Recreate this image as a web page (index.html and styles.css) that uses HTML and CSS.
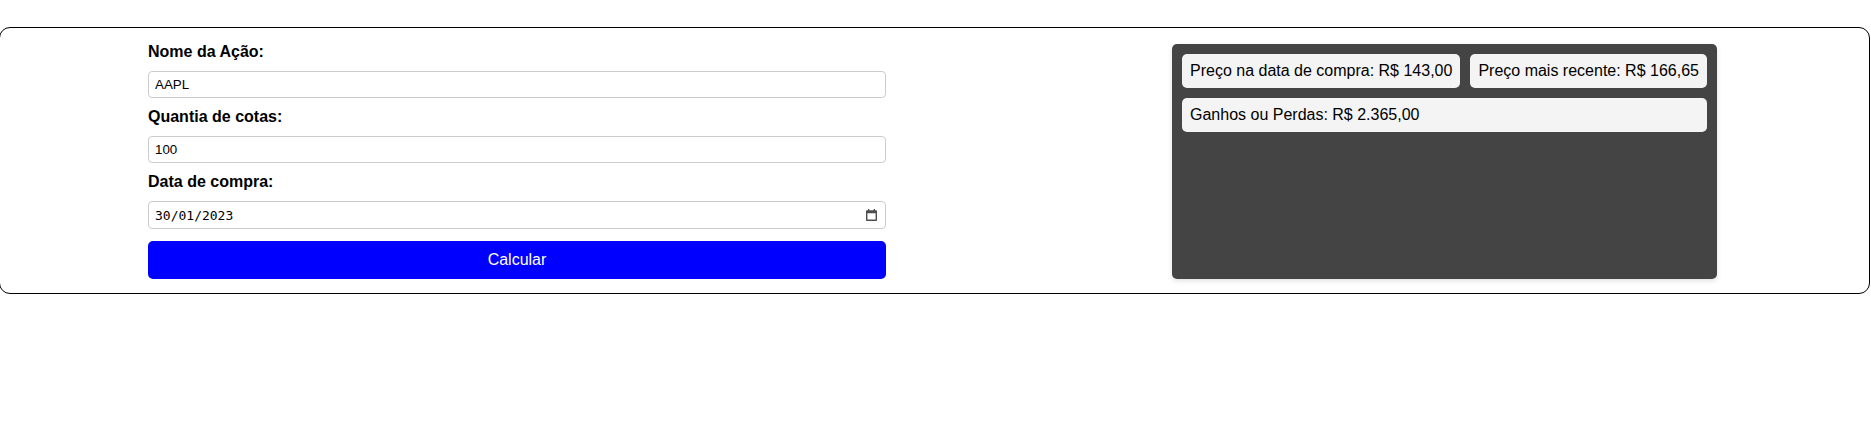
FILE: index.html
```html
<!DOCTYPE html>
<html lang="pt-BR">
<head>
<meta charset="utf-8">
<title>Calculadora de Ações</title>
<link rel="stylesheet" href="styles.css">
</head>
<body>
<div class="container">
  <form class="stock-form">
    <label class="field-label" for="acao">Nome da Ação:</label>
    <input class="field-input" id="acao" type="text" value="AAPL">
    <label class="field-label" for="cotas">Quantia de cotas:</label>
    <input class="field-input" id="cotas" type="text" value="100">
    <label class="field-label" for="data">Data de compra:</label>
    <div class="date-wrap">
      <input class="field-input date-input" id="data" type="text" value="30/01/2023">
      <svg class="cal-icon" width="11" height="12" viewBox="0 0 11 12" aria-hidden="true">
        <path fill="#4d4d4d" fill-rule="evenodd" d="M2 0h1.3v1.3h4.4V0H9v1.3h1.2c.45 0 .8.35.8.8v9.1c0 .45-.35.8-.8.8H.8c-.45 0-.8-.35-.8-.8V2.1c0-.45.35-.8.8-.8H2z M1.4 4.2v6.4h8.2V4.2z"/>
      </svg>
    </div>
    <button class="calc-btn" type="button">Calcular</button>
  </form>
  <div class="results">
    <div class="result-card">Preço na data de compra: R$ 143,00</div>
    <div class="result-card">Preço mais recente: R$ 166,65</div>
    <div class="result-card wide">Ganhos ou Perdas: R$ 2.365,00</div>
  </div>
</div>
</body>
</html>
```

FILE: styles.css
```css
html, body {
  margin: 0;
  padding: 0;
  background: #fff;
  font-family: "Liberation Sans", Arial, sans-serif;
}

.container {
  box-sizing: border-box;
  width: 1871px;
  margin-top: 27px;
  margin-left: -1px;
  border: 1px solid #000;
  border-radius: 11px;
  display: flex;
  align-items: flex-start;
  gap: 286px;
  padding: 15px 0 14px 148px;
}

.stock-form {
  width: 738px;
  display: flex;
  flex-direction: column;
}

.field-label {
  display: block;
  font-size: 16px;
  font-weight: bold;
  line-height: 18px;
  color: #000;
  margin-bottom: 10px;
}

.field-input {
  box-sizing: border-box;
  width: 100%;
  height: 27px;
  margin: 0 0 10px;
  padding: 0 6px;
  border: 1px solid #ccc;
  border-radius: 4px;
  font-family: "Liberation Sans", Arial, sans-serif;
  font-size: 13.33px;
  color: #000;
  background: #fff;
  outline: none;
}

.date-wrap {
  position: relative;
  display: flex;
}

.date-input {
  height: 28px;
  padding: 0 30px 0 6px;
  font-family: "DejaVu Sans Mono", monospace;
  font-size: 13px;
}

.cal-icon {
  position: absolute;
  right: 9px;
  top: 8px;
}

.calc-btn {
  height: 38px;
  margin-top: 2px;
  border: none;
  border-radius: 5px;
  background: #0000ff;
  color: #fff;
  font-family: "Liberation Sans", Arial, sans-serif;
  font-size: 16px;
  cursor: pointer;
}

.results {
  box-sizing: border-box;
  width: 545px;
  height: 235px;
  margin-top: 1px;
  padding: 10px;
  background: #444;
  border-radius: 5px;
  box-shadow: 0 2px 5px rgba(0, 0, 0, 0.12);
  display: flex;
  flex-wrap: wrap;
  align-content: flex-start;
  gap: 10px;
}

.result-card {
  flex: 0 0 auto;
  padding: 8px;
  background: #f4f4f4;
  border-radius: 5px;
  font-size: 16px;
  line-height: 18px;
  color: #000;
}

.result-card.wide {
  flex: 1 1 100%;
}
```
